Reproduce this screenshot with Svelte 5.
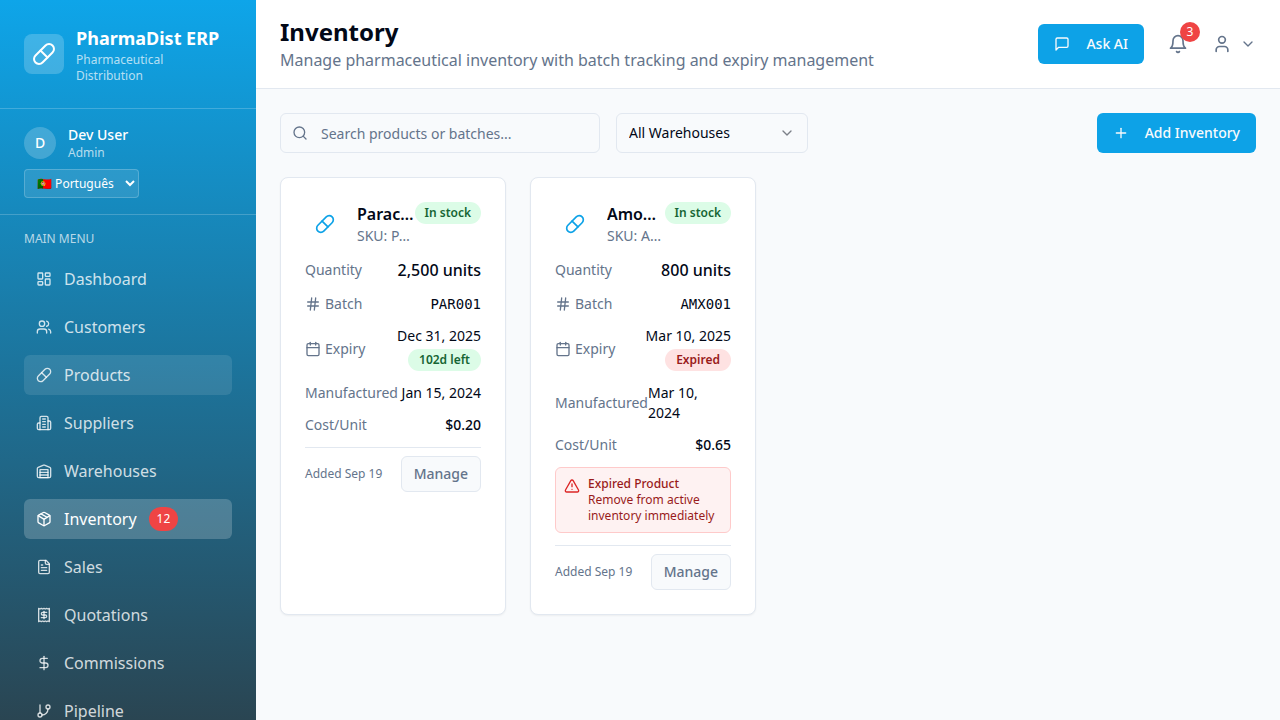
<script>
  const icons = {
    pill: ['m10.5 20.5 10-10a4.95 4.95 0 1 0-7-7l-10 10a4.95 4.95 0 1 0 7 7Z', 'm8.5 8.5 7 7'],
    dashboard: [
      'M4 3h5a1 1 0 0 1 1 1v7a1 1 0 0 1-1 1H4a1 1 0 0 1-1-1V4a1 1 0 0 1 1-1Z',
      'M15 3h5a1 1 0 0 1 1 1v3a1 1 0 0 1-1 1h-5a1 1 0 0 1-1-1V4a1 1 0 0 1 1-1Z',
      'M15 12h5a1 1 0 0 1 1 1v7a1 1 0 0 1-1 1h-5a1 1 0 0 1-1-1v-7a1 1 0 0 1 1-1Z',
      'M4 16h5a1 1 0 0 1 1 1v3a1 1 0 0 1-1 1H4a1 1 0 0 1-1-1v-3a1 1 0 0 1 1-1Z'
    ],
    users: [
      'M16 21v-2a4 4 0 0 0-4-4H6a4 4 0 0 0-4 4v2',
      'M13 7a4 4 0 1 1-8 0a4 4 0 1 1 8 0Z',
      'M22 21v-2a4 4 0 0 0-3-3.87',
      'M16 3.13a4 4 0 0 1 0 7.75'
    ],
    building: [
      'M6 22V4a2 2 0 0 1 2-2h8a2 2 0 0 1 2 2v18Z',
      'M6 12H4a2 2 0 0 0-2 2v6a2 2 0 0 0 2 2h2',
      'M18 9h2a2 2 0 0 1 2 2v9a2 2 0 0 1-2 2h-2',
      'M10 6h4', 'M10 10h4', 'M10 14h4', 'M10 18h4'
    ],
    warehouse: [
      'M22 8.35V20a2 2 0 0 1-2 2H4a2 2 0 0 1-2-2V8.35A2 2 0 0 1 3.26 6.5l8-3.2a2 2 0 0 1 1.48 0l8 3.2A2 2 0 0 1 22 8.35Z',
      'M6 18h12', 'M6 14h12', 'M6 10h12v12H6Z'
    ],
    package: [
      'M11 21.73a2 2 0 0 0 2 0l7-4A2 2 0 0 0 21 16V8a2 2 0 0 0-1-1.73l-7-4a2 2 0 0 0-2 0l-7 4A2 2 0 0 0 3 8v8a2 2 0 0 0 1 1.73z',
      'M12 22V12', 'm3.3 7 7.703 4.734a2 2 0 0 0 1.994 0L20.7 7', 'm7.5 4.27 9 5.15'
    ],
    file: [
      'M15 2H6a2 2 0 0 0-2 2v16a2 2 0 0 0 2 2h12a2 2 0 0 0 2-2V7Z',
      'M14 2v4a2 2 0 0 0 2 2h4', 'M10 9H8', 'M16 13H8', 'M16 17H8'
    ],
    receipt: [
      'M4 2v20l2-1 2 1 2-1 2 1 2-1 2 1 2-1 2 1V2l-2 1-2-1-2 1-2-1-2 1-2-1-2 1Z',
      'M16 8h-6a2 2 0 1 0 0 4h4a2 2 0 1 1 0 4H8', 'M12 17.5v-11'
    ],
    dollar: ['M12 2v20', 'M17 5H9.5a3.5 3.5 0 0 0 0 7h5a3.5 3.5 0 0 1 0 7H6'],
    branch: [
      'M6 3v12', 'M21 6a3 3 0 1 1-6 0a3 3 0 1 1 6 0Z',
      'M9 18a3 3 0 1 1-6 0a3 3 0 1 1 6 0Z', 'M18 9a9 9 0 0 1-9 9'
    ],
    message: ['M21 15a2 2 0 0 1-2 2H7l-4 4V5a2 2 0 0 1 2-2h14a2 2 0 0 1 2 2z'],
    bell: ['M6 8a6 6 0 0 1 12 0c0 7 3 9 3 9H3s3-2 3-9', 'M10.3 21a1.94 1.94 0 0 0 3.4 0'],
    user: ['M19 21v-2a4 4 0 0 0-4-4H9a4 4 0 0 0-4 4v2', 'M16 7a4 4 0 1 1-8 0a4 4 0 1 1 8 0Z'],
    chevron: ['m6 9 6 6 6-6'],
    search: ['M19 11a8 8 0 1 1-16 0a8 8 0 1 1 16 0Z', 'm21 21-4.3-4.3'],
    plus: ['M5 12h14', 'M12 5v14'],
    hash: ['M4 9h16', 'M4 15h16', 'M10 3 8 21', 'M16 3l-2 18'],
    calendar: [
      'M8 2v4', 'M16 2v4',
      'M5 4h14a2 2 0 0 1 2 2v14a2 2 0 0 1-2 2H5a2 2 0 0 1-2-2V6a2 2 0 0 1 2-2Z', 'M3 10h18'
    ],
    alert: ['m21.73 18-8-14a2 2 0 0 0-3.48 0l-8 14A2 2 0 0 0 4 21h16a2 2 0 0 0 1.73-3', 'M12 9v4', 'M12 17h.01']
  };

  const menu = [
    { label: 'Dashboard', icon: 'dashboard' },
    { label: 'Customers', icon: 'users' },
    { label: 'Products', icon: 'pill', hover: true },
    { label: 'Suppliers', icon: 'building' },
    { label: 'Warehouses', icon: 'warehouse' },
    { label: 'Inventory', icon: 'package', active: true, count: 12 },
    { label: 'Sales', icon: 'file' },
    { label: 'Quotations', icon: 'receipt' },
    { label: 'Commissions', icon: 'dollar' },
    { label: 'Pipeline', icon: 'branch' }
  ];

  const items = [
    {
      name: 'Paracetamol', sku: 'PAR-500', quantity: '2,500 units', batch: 'PAR001',
      expiry: 'Dec 31, 2025', left: '102d left', expired: false,
      made: 'Jan 15, 2024', cost: '$0.20', added: 'Sep 19'
    },
    {
      name: 'Amoxicillin', sku: 'AMX-250', quantity: '800 units', batch: 'AMX001',
      expiry: 'Mar 10, 2025', left: 'Expired', expired: true,
      made: 'Mar 10, 2024', cost: '$0.65', added: 'Sep 19'
    }
  ];
</script>

{#snippet icon(name, size = 16)}
  <svg class="icon" width={size} height={size} viewBox="0 0 24 24" aria-hidden="true">
    {#each icons[name] as d}<path {d} />{/each}
  </svg>
{/snippet}

<div class="app">
  <aside class="sidebar">
    <div class="brand">
      <div class="logo">{@render icon('pill', 24)}</div>
      <div>
        <div class="brand-name">PharmaDist ERP</div>
        <div class="brand-sub">Pharmaceutical Distribution</div>
      </div>
    </div>

    <div class="account">
      <div class="who">
        <div class="avatar">D</div>
        <div>
          <div class="who-name">Dev User</div>
          <div class="who-role">Admin</div>
        </div>
      </div>
      <select class="language" aria-label="Language">
        <option>🇵🇹 Português</option>
      </select>
    </div>

    <nav class="menu" aria-label="Main menu">
      <div class="menu-title">MAIN MENU</div>
      {#each menu as entry}
        <a href="#{entry.label.toLowerCase()}" class="menu-link" class:hover={entry.hover} class:active={entry.active}>
          {@render icon(entry.icon)}
          <span>{entry.label}</span>
          {#if entry.count}<span class="count">{entry.count}</span>{/if}
        </a>
      {/each}
    </nav>
  </aside>

  <div class="page">
    <header class="topbar">
      <div>
        <h1>Inventory</h1>
        <p>Manage pharmaceutical inventory with batch tracking and expiry management</p>
      </div>
      <div class="actions">
        <button class="primary">{@render icon('message')}Ask AI</button>
        <button class="bell" aria-label="Notifications">
          {@render icon('bell', 20)}
          <span class="bell-count">3</span>
        </button>
        <button class="profile" aria-label="Profile">
          {@render icon('user', 20)}
          {@render icon('chevron')}
        </button>
      </div>
    </header>

    <main>
      <div class="toolbar">
        <label class="search">
          {@render icon('search')}
          <input type="text" placeholder="Search products or batches..." aria-label="Search products or batches" />
        </label>
        <label class="filter">
          <select aria-label="Warehouse">
            <option>All Warehouses</option>
          </select>
          {@render icon('chevron')}
        </label>
        <button class="primary add">{@render icon('plus')}Add Inventory</button>
      </div>

      <div class="cards">
        {#each items as item}
          <article class="card">
            <div class="card-head">
              <div class="card-icon">{@render icon('pill', 20)}</div>
              <div class="card-title">
                <h2>{item.name}</h2>
                <p>SKU: {item.sku}</p>
              </div>
              <span class="badge good">In stock</span>
            </div>

            <dl>
              <div class="row">
                <dt>Quantity</dt>
                <dd class="quantity">{item.quantity}</dd>
              </div>
              <div class="row">
                <dt>{@render icon('hash')}Batch</dt>
                <dd class="mono">{item.batch}</dd>
              </div>
              <div class="row">
                <dt>{@render icon('calendar')}Expiry</dt>
                <dd class="expiry">
                  <span>{item.expiry}</span>
                  <span class="badge" class:good={!item.expired} class:bad={item.expired}>{item.left}</span>
                </dd>
              </div>
              <div class="row">
                <dt>Manufactured</dt>
                <dd>{item.made}</dd>
              </div>
              <div class="row">
                <dt>Cost/Unit</dt>
                <dd class="cost">{item.cost}</dd>
              </div>
            </dl>

            {#if item.expired}
              <div class="alert" role="alert">
                {@render icon('alert')}
                <div>
                  <strong>Expired Product</strong>
                  <p>Remove from active inventory immediately</p>
                </div>
              </div>
            {/if}

            <div class="card-foot">
              <span>Added {item.added}</span>
              <button class="manage">Manage</button>
            </div>
          </article>
        {/each}
      </div>
    </main>
  </div>
</div>

<style>
  :global(body) {
    margin: 0;
    background: #f8fafc;
  }
  .app,
  .app :global(*) {
    box-sizing: border-box;
  }
  .app {
    display: flex;
    height: 100vh;
    overflow: hidden;
    color: #020817;
    font-family: 'Noto Sans', sans-serif;
    font-size: 16px;
    line-height: 24px;
  }
  h1, h2, p, dl, dd {
    margin: 0;
  }
  button, input, select {
    font-family: inherit;
  }
  .icon {
    display: block;
    flex-shrink: 0;
    fill: none;
    stroke: currentColor;
    stroke-width: 2;
    stroke-linecap: round;
    stroke-linejoin: round;
  }

  /* Sidebar */
  .sidebar {
    width: 256px;
    flex-shrink: 0;
    overflow: hidden;
    color: #fff;
    background: linear-gradient(180deg, #0ea5e9, #2a4552);
  }
  .brand {
    display: flex;
    align-items: center;
    gap: 12px;
    padding: 24px;
    border-bottom: 1px solid rgba(255, 255, 255, 0.2);
  }
  .logo {
    display: grid;
    place-items: center;
    width: 40px;
    height: 40px;
    flex-shrink: 0;
    border-radius: 8px;
    background: rgba(255, 255, 255, 0.2);
  }
  .brand-name {
    font-size: 18px;
    font-weight: 700;
    line-height: 28px;
    white-space: nowrap;
  }
  .brand-sub,
  .who-role {
    font-size: 12px;
    line-height: 16px;
    color: rgba(255, 255, 255, 0.7);
  }
  .account {
    padding: 16px 24px;
    border-bottom: 1px solid rgba(255, 255, 255, 0.2);
  }
  .who {
    display: flex;
    align-items: center;
    gap: 12px;
    margin-bottom: 8px;
  }
  .avatar {
    display: grid;
    place-items: center;
    width: 32px;
    height: 32px;
    border-radius: 50%;
    background: rgba(255, 255, 255, 0.2);
    font-size: 14px;
    font-weight: 500;
  }
  .who-name {
    font-size: 14px;
    font-weight: 500;
    line-height: 20px;
  }
  .language {
    display: block;
    height: 29px;
    padding: 4px 8px;
    border: 1px solid rgba(255, 255, 255, 0.2);
    border-radius: 4px;
    background: rgba(255, 255, 255, 0.1);
    color: #fff;
    font-size: 12px;
  }
  .menu {
    display: flex;
    flex-direction: column;
    gap: 8px;
    padding: 16px 24px;
  }
  .menu-title {
    margin-bottom: 4px;
    font-size: 12px;
    line-height: 16px;
    color: rgba(255, 255, 255, 0.7);
  }
  .menu-link {
    display: flex;
    align-items: center;
    gap: 12px;
    height: 40px;
    flex-shrink: 0;
    padding: 0 12px;
    border-radius: 6px;
    color: rgba(255, 255, 255, 0.8);
    text-decoration: none;
  }
  .menu-link.hover {
    background: rgba(255, 255, 255, 0.1);
  }
  .menu-link.active {
    background: rgba(255, 255, 255, 0.2);
    color: #fff;
  }
  .count {
    padding: 4px 8px;
    border-radius: 12px;
    background: #ef4444;
    font-size: 12px;
    line-height: 16px;
  }

  /* Top bar */
  .page {
    flex: 1;
    min-width: 0;
    overflow: auto;
  }
  .topbar {
    display: flex;
    align-items: center;
    justify-content: space-between;
    padding: 16px 24px;
    border-bottom: 1px solid #e2e8f0;
    background: #fff;
  }
  h1 {
    font-size: 24px;
    font-weight: 700;
    line-height: 32px;
  }
  .topbar p {
    color: #64748b;
  }
  .actions {
    display: flex;
    align-items: center;
    gap: 16px;
  }
  .primary {
    display: flex;
    align-items: center;
    gap: 16px;
    height: 40px;
    padding: 0 16px;
    border: 0;
    border-radius: 6px;
    background: #0da2e7;
    color: #f8fafc;
    font-size: 14px;
    font-weight: 500;
    line-height: 20px;
    white-space: nowrap;
  }
  .bell,
  .profile {
    display: flex;
    align-items: center;
    border: 0;
    background: none;
    color: #64748b;
  }
  .bell {
    position: relative;
    padding: 8px;
  }
  .bell-count {
    position: absolute;
    top: -4px;
    right: -4px;
    width: 20px;
    height: 20px;
    border-radius: 50%;
    background: #ef4444;
    color: #fff;
    font-size: 12px;
    line-height: 20px;
    text-align: center;
  }
  .profile {
    gap: 8px;
    padding: 0;
  }

  /* Toolbar */
  main {
    padding: 24px;
  }
  .toolbar {
    display: flex;
    gap: 16px;
    margin-bottom: 24px;
  }
  .search,
  .filter {
    display: flex;
    align-items: center;
    height: 40px;
    border: 1px solid #e2e8f0;
    border-radius: 6px;
  }
  .search {
    width: 320px;
    gap: 13px;
    padding: 0 11px;
    color: #64748b;
  }
  .search input {
    flex: 1;
    min-width: 0;
    height: 38px;
    padding: 0;
    border: 0;
    outline: 0;
    background: none;
    color: #020817;
    font-size: 14px;
  }
  .search input::placeholder {
    color: #64748b;
    opacity: 1;
  }
  .filter {
    width: 192px;
    padding: 0 12px;
  }
  .filter select {
    flex: 1;
    min-width: 0;
    height: 36px;
    padding: 0;
    border: 0;
    outline: 0;
    appearance: none;
    background: none;
    color: #020817;
    font-size: 14px;
    line-height: 20px;
  }
  .filter .icon {
    opacity: 0.5;
  }
  .add {
    margin-left: auto;
  }

  /* Cards */
  .cards {
    display: grid;
    grid-template-columns: repeat(4, minmax(0, 1fr));
    gap: 24px;
  }
  .card {
    display: flex;
    flex-direction: column;
    gap: 12px;
    padding: 24px;
    border: 1px solid #e2e8f0;
    border-radius: 8px;
    background: #fff;
    box-shadow: 0 1px 2px rgba(0, 0, 0, 0.05);
  }
  .card-head {
    display: flex;
    align-items: center;
  }
  .card-icon {
    display: grid;
    place-items: center;
    width: 40px;
    height: 40px;
    flex-shrink: 0;
    margin-right: 12px;
    color: #0da2e7;
  }
  .card-title {
    flex: 1;
    min-width: 0;
  }
  .card-title h2,
  .card-title p {
    overflow: hidden;
    text-overflow: ellipsis;
    white-space: nowrap;
  }
  h2 {
    font-size: 16px;
    font-weight: 600;
    line-height: 24px;
  }
  .card-title p {
    color: #64748b;
    font-size: 14px;
    line-height: 20px;
  }
  .badge {
    flex-shrink: 0;
    padding: 3px 11px;
    border-radius: 11px;
    font-size: 12px;
    font-weight: 600;
    line-height: 16px;
    white-space: nowrap;
  }
  .card-head .badge {
    align-self: flex-start;
    padding: 3px 10px;
  }
  .good {
    background: #dcfce7;
    color: #166534;
  }
  .bad {
    background: #fee2e2;
    color: #991b1b;
  }
  dl {
    display: flex;
    flex-direction: column;
    gap: 12px;
    font-size: 14px;
    line-height: 20px;
  }
  .row {
    display: flex;
    align-items: center;
    justify-content: space-between;
  }
  dt {
    display: flex;
    align-items: center;
    gap: 4px;
    color: #64748b;
  }
  .quantity {
    font-size: 16px;
    font-weight: 500;
    line-height: 24px;
  }
  .mono {
    font-family: 'DejaVu Sans Mono', monospace;
  }
  .expiry {
    display: flex;
    flex-direction: column;
    align-items: flex-end;
    gap: 3px;
  }
  .cost {
    font-weight: 500;
  }
  .alert {
    display: flex;
    gap: 8px;
    padding: 8px;
    border: 1px solid #fecaca;
    border-radius: 6px;
    background: #fef2f2;
    color: #991b1b;
    font-size: 12px;
    line-height: 16px;
  }
  .alert .icon {
    margin-top: 2px;
    color: #dc2626;
  }
  .alert strong {
    display: block;
    font-weight: 500;
  }
  .card-foot {
    display: flex;
    align-items: center;
    justify-content: space-between;
    padding-top: 8px;
    border-top: 1px solid #e2e8f0;
    color: #64748b;
    font-size: 12px;
    line-height: 16px;
  }
  .manage {
    height: 36px;
    padding: 0 12px;
    border: 1px solid #e2e8f0;
    border-radius: 6px;
    background: #f8fafc;
    color: #64748b;
    font-size: 14px;
    font-weight: 500;
    line-height: 20px;
  }
</style>
